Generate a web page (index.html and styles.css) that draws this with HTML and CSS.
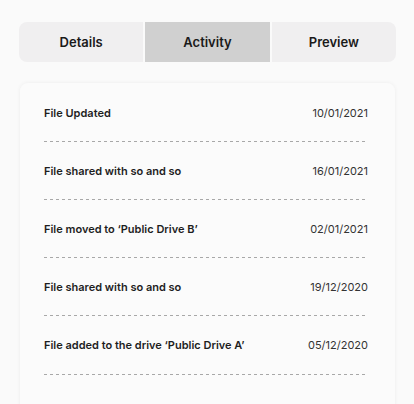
FILE: index.html
```html
<!DOCTYPE html>
<html>
<head>
<meta charset="utf-8">
<link rel="stylesheet" href="styles.css">
</head>
<body>
<div class="page">
  <div class="tabs">
    <div class="tab">Details</div>
    <div class="tab active">Activity</div>
    <div class="tab">Preview</div>
  </div>
  <div class="card">
    <div class="row"><span class="title">File Updated</span><span class="date">10/01/2021</span></div>
    <div class="row"><span class="title">File shared with so and so</span><span class="date">16/01/2021</span></div>
    <div class="row"><span class="title">File moved to ‘Public Drive B’</span><span class="date">02/01/2021</span></div>
    <div class="row"><span class="title">File shared with so and so</span><span class="date">19/12/2020</span></div>
    <div class="row tall"><span class="title">File added to the drive ‘Public Drive A’</span><span class="date">05/12/2020</span></div>
  </div>
</div>
</body>
</html>
```

FILE: styles.css
```css
html, body {
  margin: 0;
  padding: 0;
  background: #fafafa;
  font-family: Inter, "Noto Sans", sans-serif;
  color: #1e1e1e;
}
.page {
  padding: 22px 18px 0 19px;
  display: flex;
  flex-direction: column;
  gap: 21px;
}
.tabs {
  display: flex;
  gap: 2px;
  height: 40px;
  border-radius: 8px;
  overflow: hidden;
}
.tab {
  flex: 1;
  display: flex;
  align-items: center;
  justify-content: center;
  background: #f0eff0;
  font-size: 13px;
  font-weight: 600;
  color: #1a1a1a;
}
.tab.active {
  background: #d0d0d0;
}
.card {
  background: #fbfbfb;
  border-radius: 8px;
  box-shadow: 0 0 4px rgba(0, 0, 0, 0.06);
  padding: 23px 27px 30px 24px;
  margin: 0 1px 0 1px;
}
.row {
  display: flex;
  justify-content: space-between;
  align-items: center;
  line-height: 14px;
  padding-bottom: 22px;
  margin-bottom: 22px;
  position: relative;
}
.row.tall {
  margin-top: 2px;
  padding-bottom: 23px;
}
.row::after {
  content: "";
  position: absolute;
  left: 0;
  right: 0;
  bottom: 0;
  height: 1px;
  background: repeating-linear-gradient(to right, #a8a8a8 0 3px, transparent 3px 6px);
}
.title {
  font-size: 11px;
  font-weight: 600;
  color: #1e1e1e;
}
.date {
  font-size: 11px;
  font-weight: 400;
  color: #333;
}
```
